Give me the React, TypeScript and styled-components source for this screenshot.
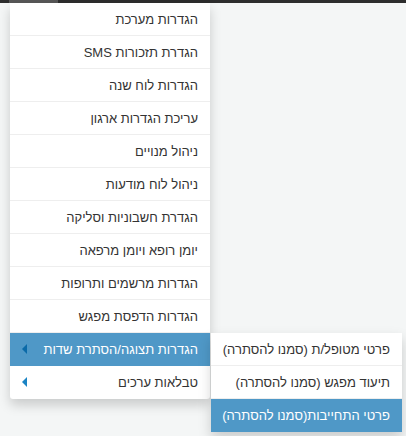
import React from "react";
import styled, { createGlobalStyle } from "styled-components";

const Global = createGlobalStyle`
  html, body { margin: 0; padding: 0; }
  body {
    background: #f4f6f6;
    font-family: "Liberation Sans", Arial, sans-serif;
    width: 406px;
    height: 436px;
    overflow: hidden;
  }
`;

const Page = styled.div`
  position: relative;
  width: 406px;
  height: 436px;
`;

const TopBar = styled.div`
  height: 3px;
  background: #2d2d2d;
  display: flex;
  padding-left: 9px;
`;

const TopTab = styled.div`
  width: 49px;
  background: #575757;
`;

const Menu = styled.ul`
  position: absolute;
  top: 3px;
  left: 10px;
  width: 200px;
  margin: 0;
  padding: 0;
  list-style: none;
  background: #fff;
  direction: rtl;
  box-shadow: 0 6px 12px rgba(0, 0, 0, 0.175);
  border-radius: 0 0 3px 3px;
`;

const Item = styled.li<{ $active?: boolean; $last?: boolean }>`
  position: relative;
  height: 33px;
  box-sizing: border-box;
  display: flex;
  align-items: center;
  justify-content: space-between;
  padding: 0 12px 0 12px;
  font-size: 13px;
  color: ${(p) => (p.$active ? "#fff" : "#333")};
  background: ${(p) => (p.$active ? "#4f98c7" : "transparent")};
  border-bottom: 1px solid ${(p) => (p.$active || p.$last ? "transparent" : "#eeeeee")};
  white-space: nowrap;
`;

const Arrow = styled.span<{ $onBlue?: boolean }>`
  width: 0;
  height: 0;
  border-top: 5px solid transparent;
  border-bottom: 5px solid transparent;
  border-right: 5px solid ${(p) => (p.$onBlue ? "#0b6aa8" : "#1b84c4")};
  margin-left: 0;
`;

const SubMenu = styled.ul`
  position: absolute;
  top: 0;
  left: 201px;
  width: 191px;
  margin: 0;
  padding: 0;
  list-style: none;
  background: #fff;
  direction: rtl;
  box-shadow: 0 6px 12px rgba(0, 0, 0, 0.175);
`;

const SubItem = styled.li<{ $active?: boolean }>`
  height: 33px;
  box-sizing: border-box;
  display: flex;
  align-items: center;
  padding: 0 12px;
  font-size: 13px;
  color: ${(p) => (p.$active ? "#fff" : "#333")};
  background: ${(p) => (p.$active ? "#4f98c7" : "transparent")};
  border-bottom: 1px solid ${(p) => (p.$active ? "transparent" : "#eeeeee")};
  white-space: nowrap;
`;

const items = [
  "הגדרות מערכת",
  "הגדרת תזכורות SMS",
  "הגדרות לוח שנה",
  "עריכת הגדרות ארגון",
  "ניהול מנויים",
  "ניהול לוח מודעות",
  "הגדרת חשבוניות וסליקה",
  "יומן רופא ויומן מרפאה",
  "הגדרות מרשמים ותרופות",
  "הגדרות הדפסת מפגש",
];

const subItems = [
  { label: "פרטי מטופל/ת (סמנו להסתרה)" },
  { label: "תיעוד מפגש (סמנו להסתרה)" },
  { label: "פרטי התחייבות(סמנו להסתרה)", active: true },
];

export default function App() {
  return (
    <Page>
      <Global />
      <TopBar>
        <TopTab />
      </TopBar>
      <Menu>
        {items.map((t) => (
          <Item key={t}>
            <span>{t}</span>
          </Item>
        ))}
        <Item $active>
          <span>הגדרות תצוגה/הסתרת שדות</span>
          <Arrow $onBlue />
          <SubMenu>
            {subItems.map((s) => (
              <SubItem key={s.label} $active={s.active}>
                {s.label}
              </SubItem>
            ))}
          </SubMenu>
        </Item>
        <Item $last>
          <span>טבלאות ערכים</span>
          <Arrow />
        </Item>
      </Menu>
    </Page>
  );
}
